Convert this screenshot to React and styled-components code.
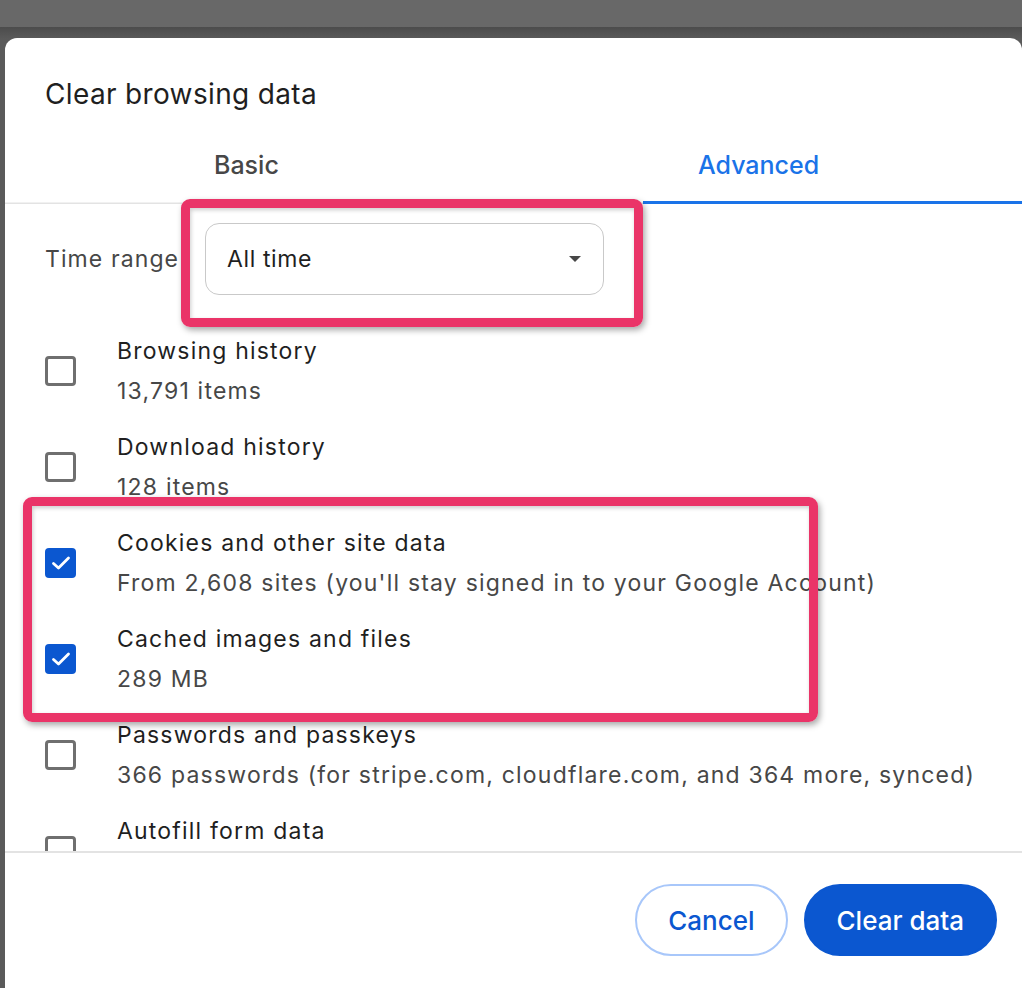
import React from 'react';
import styled, { createGlobalStyle } from 'styled-components';

const GlobalStyle = createGlobalStyle`
    html, body {
        margin: 0;
        padding: 0;
        background: #575757;
        font-family: Inter, "Liberation Sans", Arial, sans-serif;
    }
`

const Page = styled.div`
    width: 1022px;
    height: 988px;
    overflow: hidden;
    display: flex;
    flex-direction: column;
    background: #585858;
`

const TopBar = styled.div`
    height: 27px;
    flex-shrink: 0;
    background: #686868;
`

const Backdrop = styled.div`
    flex: 1;
    padding: 11px 0 0 5px;
    background: linear-gradient(#4c4c4c, #5a5a5a 12px);
`

const Dialog = styled.div`
    position: relative;
    width: 1017px;
    height: 960px;
    background: #fff;
    border-radius: 12px 12px 0 0;
    display: flex;
    flex-direction: column;
`

const Title = styled.h1`
    margin: 36px 0 14px 40px;
    font-size: 28px;
    line-height: 40px;
    font-weight: 400;
    color: #1f1f1f;
    letter-spacing: 0.35px;
`

const Tabs = styled.div`
    display: grid;
    grid-template-columns: 638px 1fr;
    box-shadow: inset 0 -1.5px 0 #e3e3e3;
`

const Tab = styled.div`
    height: 73px;
    display: flex;
    align-items: center;
    padding-left: ${p => p.$indent}px;
    font-size: 25px;
    font-weight: 500;
    color: ${p => (p.$active ? '#1a73e8' : '#474747')};
    border-bottom: 3px solid ${p => (p.$active ? '#1a73e8' : 'transparent')};
`

const RangeRow = styled.div`
    display: flex;
    align-items: center;
    padding: 19px 0 36px 40px;
`

const RangeLabel = styled.span`
    width: 160px;
    font-size: 23px;
    color: #474747;
    letter-spacing: 1.1px;
`

const Select = styled.div`
    width: 399px;
    height: 72px;
    box-sizing: border-box;
    border: 1.5px solid #c9c9c9;
    border-radius: 14px;
    display: flex;
    align-items: center;
    justify-content: space-between;
    padding: 0 22px 0 21px;
    font-size: 23px;
    color: #1f1f1f;
    letter-spacing: 0.6px;
`

const Caret = styled.span`
    width: 0;
    height: 0;
    border-left: 6.5px solid transparent;
    border-right: 6.5px solid transparent;
    border-top: 6.5px solid #474747;
`

const List = styled.div`
    height: 520px;
    overflow: hidden;
    display: flex;
    flex-direction: column;
    gap: 16px;
    padding-left: 40px;
`

const Row = styled.div`
    display: grid;
    grid-template-columns: 72px 1fr;
    align-items: center;
    flex-shrink: 0;
`

const Box = styled.span`
    width: 31px;
    height: 30px;
    box-sizing: border-box;
    border-radius: 4px;
    border: ${p => (p.$checked ? 'none' : '3px solid #6f6f6f')};
    background: ${p => (p.$checked ? '#0b57d0' : '#fff')};
    display: flex;
    align-items: center;
    justify-content: center;
`

const Texts = styled.div`
    display: flex;
    flex-direction: column;
`

const Label = styled.span`
    height: 40px;
    font-size: 23px;
    line-height: 40px;
    color: ${p => (p.$muted ? '#474747' : '#1f1f1f')};
    letter-spacing: 1.2px;
    white-space: nowrap;
`

const Footer = styled.div`
    border-top: 2px solid #e3e3e3;
    display: flex;
    justify-content: flex-end;
    gap: 16px;
    padding: 31px 25px 0 0;
`

const Button = styled.button`
    height: 72px;
    padding: 0 ${p => p.$pad}px;
    border-radius: 36px;
    font-family: inherit;
    font-size: 26px;
    font-weight: 500;
    border: 2px solid ${p => (p.$primary ? '#0b57d0' : '#a8c7fa')};
    background: ${p => (p.$primary ? '#0b57d0' : '#fff')};
    color: ${p => (p.$primary ? '#fff' : '#0b57d0')};
`

const Highlight = styled.div`
    position: absolute;
    left: ${p => p.$x}px;
    top: ${p => p.$y}px;
    width: ${p => p.$w}px;
    height: ${p => p.$h}px;
    box-sizing: border-box;
    border: 9px solid #ea3468;
    border-radius: 9px;
    box-shadow: 2px 3px 6px rgba(0, 0, 0, 0.35), inset 1px 2px 4px rgba(0, 0, 0, 0.2);
    pointer-events: none;
`

const items = [
    { title: 'Browsing history', sub: '13,791 items', checked: false },
    { title: 'Download history', sub: '128 items', checked: false },
    { title: 'Cookies and other site data', sub: "From 2,608 sites (you'll stay signed in to your Google Account)", checked: true },
    { title: 'Cached images and files', sub: '289 MB', checked: true },
    { title: 'Passwords and passkeys', sub: '366 passwords (for stripe.com, cloudflare.com, and 364 more, synced)', checked: false },
    { title: 'Autofill form data', sub: '\u00a0', checked: false },
]

const Check = () => (
    <svg width="20" height="16" viewBox="0 0 20 16">
        <path d="M2.5 8.5 L7.5 13 L17.5 3" fill="none" stroke="#fff" strokeWidth="2.8" strokeLinecap="round" strokeLinejoin="round" />
    </svg>
)

const App = () => {
    return (
        <>
            <GlobalStyle />
            <Page>
                <TopBar />
                <Backdrop>
                    <Dialog>
                        <Title>Clear browsing data</Title>
                        <Tabs>
                            <Tab $indent={209}>Basic</Tab>
                            <Tab $indent={55} $active>Advanced</Tab>
                        </Tabs>
                        <RangeRow>
                            <RangeLabel>Time range</RangeLabel>
                            <Select>
                                All time
                                <Caret />
                            </Select>
                        </RangeRow>
                        <List>
                            {items.map((item, index) => (
                                <Row key={index}>
                                    <Box $checked={item.checked}>{item.checked && <Check />}</Box>
                                    <Texts>
                                        <Label>{item.title}</Label>
                                        <Label $muted>{item.sub}</Label>
                                    </Texts>
                                </Row>
                            ))}
                        </List>
                        <Footer>
                            <Button $pad={31}>Cancel</Button>
                            <Button $pad={31} $primary>Clear data</Button>
                        </Footer>
                        <Highlight $x={176} $y={161} $w={462} $h={128} />
                        <Highlight $x={18} $y={459} $w={795} $h={225} />
                    </Dialog>
                </Backdrop>
            </Page>
        </>
    )
}

export default App
